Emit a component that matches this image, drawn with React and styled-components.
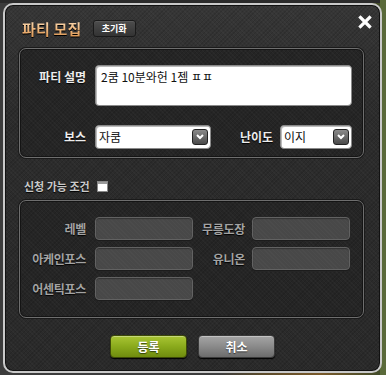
import React from 'react';
import styled, { createGlobalStyle } from 'styled-components';

const Global = createGlobalStyle`
  html, body {
    margin: 0;
    padding: 0;
    background: #2a2a2a;
  }
  body {
    width: 386px;
    height: 375px;
    overflow: hidden;
    font-family: "Noto Sans CJK KR", "Noto Sans", sans-serif;
    background:
      linear-gradient(90deg, rgba(0,0,0,0) 0 380px, #5a6a3a 380px),
      linear-gradient(180deg, #2b2b2b 0 3px, transparent 3px),
      linear-gradient(90deg, #3c3c3c 0 220px, #5a4a2a 260px, #7a5a2a 320px, #3c4a2a 386px);
  }
`;

const texture = `
  repeating-linear-gradient(45deg, rgba(255,255,255,0.025) 0 1px, transparent 1px 3px),
  repeating-linear-gradient(-45deg, rgba(0,0,0,0.12) 0 1px, transparent 1px 3px)
`;

// window
const Window = styled.div`
  position: relative;
  box-sizing: border-box;
  margin: 3px 0 0 3px;
  width: 379px;
  height: 370px;
  border: 2px solid #c9c9c9;
  border-radius: 10px;
  padding: 12px 16px 0 14px;
  display: flex;
  flex-direction: column;
  background: ${texture}, linear-gradient(180deg, #363636 0%, #2c2c2c 30%, #2a2a2a 100%);
  box-shadow: inset 0 0 0 1px #111;
`;

const Header = styled.div`
  height: 22px;
  display: flex;
  align-items: center;
  gap: 11px;
  padding-left: 3px;
`;

const Title = styled.h1`
  margin: 0;
  font-size: 15px;
  font-weight: 700;
  letter-spacing: 0.2px;
  background: linear-gradient(180deg, #fde6c6 0%, #eeb67c 55%, #d68f4a 100%);
  -webkit-background-clip: text;
  background-clip: text;
  color: transparent;
  filter: drop-shadow(0 1px 0 #000);
`;

const SmallButton = styled.button`
  height: 17px;
  width: 43px;
  padding: 0;
  border: 1px solid #1a1a1a;
  border-radius: 3px;
  background: linear-gradient(180deg, #4d4d4d 0%, #333 100%);
  box-shadow: inset 0 1px 0 #5a5a5a;
  color: #fff;
  font-family: inherit;
  font-size: 9px;
  font-weight: 700;
  line-height: 15px;
`;

const Close = styled.button`
  position: absolute;
  top: 10px;
  right: 8px;
  width: 14px;
  height: 14px;
  padding: 0;
  border: 0;
  background: none;
`;

const Panel = styled.div`
  box-sizing: border-box;
  width: 345px;
  height: ${p => p.$h}px;
  margin-top: ${p => p.$mt}px;
  border: 1px solid #6e6e6e;
  border-radius: 7px;
  background: ${texture}, #252525;
  box-shadow: inset 0 0 0 1px #141414, 0 0 0 1px #1a1a1a;
`;

const InfoPanel = styled(Panel)`
  padding: 16px 11px 0 0;
  display: grid;
  grid-template-columns: 66px 1fr;
  column-gap: 9px;
  row-gap: 10px;
  align-items: start;
`;

const Label = styled.span`
  font-size: 12px;
  font-weight: 700;
  color: #ededed;
  text-align: right;
  line-height: 24px;
  white-space: nowrap;
  text-shadow: 0 1px 1px #000;
`;

const TextBox = styled.div`
  box-sizing: border-box;
  height: 41px;
  background: #fff;
  border: 1px solid #8a8a8a;
  border-radius: 4px;
  box-shadow: inset 1px 1px 0 #bbb;
  padding: 2px 5px;
  font-size: 12px;
  line-height: 18px;
  color: #111;
`;

const SelectRow = styled.div`
  display: flex;
  align-items: center;
  gap: 7px;
`;

const Select = styled.div`
  box-sizing: border-box;
  width: ${p => p.$w}px;
  height: 24px;
  background: #fff;
  border: 1px solid #8a8a8a;
  border-radius: 4px;
  box-shadow: inset 1px 1px 0 #bbb;
  display: flex;
  align-items: center;
  justify-content: space-between;
  padding: 0 2px 0 3px;
  font-size: 12px;
  color: #111;
`;

const Arrow = styled.span`
  width: 16px;
  height: 16px;
  border-radius: 3px;
  border: 1px solid #222;
  box-sizing: border-box;
  background: linear-gradient(180deg, #8a8a8a 0%, #4a4a4a 100%);
  display: flex;
  align-items: center;
  justify-content: center;
`;

const SideLabel = styled(Label)`
  flex: 1;
`;

const CondRow = styled.div`
  display: flex;
  align-items: center;
  gap: 7px;
  margin: 21px 0 0 5px;
  height: 14px;
`;

const CondLabel = styled.span`
  font-size: 11px;
  font-weight: 700;
  color: #c9c9c9;
  text-shadow: 0 1px 1px #000;
`;

const Check = styled.span`
  width: 11px;
  height: 11px;
  box-sizing: border-box;
  border: 1px solid #888;
  background: linear-gradient(180deg, #9a9a9a 0 2px, #fff 2px);
`;

const CondPanel = styled(Panel)`
  padding-top: 16px;
  display: grid;
  grid-template-columns: 75px 98px 59px 98px;
  grid-auto-rows: 23px;
  row-gap: 7px;
`;

const CondLabelCell = styled.span`
  font-size: 12px;
  font-weight: 700;
  letter-spacing: -0.3px;
  color: #a3a3a3;
  text-align: right;
  padding-right: ${p => p.$pr}px;
  line-height: 23px;
  white-space: nowrap;
  text-shadow: 0 1px 1px #000;
`;

const Field = styled.div`
  box-sizing: border-box;
  border: 1px solid #626262;
  border-radius: 4px;
  background: repeating-linear-gradient(45deg, rgba(255,255,255,0.02) 0 1px, transparent 1px 3px), #484848;
  box-shadow: inset 0 1px 1px #333, 0 1px 0 #1c1c1c;
`;

const Footer = styled.div`
  display: flex;
  justify-content: center;
  gap: 11px;
  margin-top: 17px;
  margin-left: 2px;
`;

const ActionButton = styled.button`
  width: 77px;
  height: 23px;
  padding: 0;
  border: 1px solid ${p => (p.$primary ? '#3d4a08' : '#3a3a3a')};
  border-radius: 4px;
  background: ${p =>
    p.$primary
      ? 'linear-gradient(180deg, #a9c534 0%, #8aaa1c 50%, #6f8c0e 100%)'
      : 'linear-gradient(180deg, #a5a5a5 0%, #8a8a8a 50%, #6c6c6c 100%)'};
  box-shadow: inset 0 1px 0 rgba(255,255,255,0.35), 0 1px 1px #000;
  color: #fff;
  font-family: inherit;
  font-size: 12px;
  font-weight: 700;
  text-shadow: 0 1px 1px rgba(0,0,0,0.6);
`;

function Chevron() {
  return (
    <svg width="8" height="6" viewBox="0 0 8 6">
      <path d="M1 1 L4 4 L7 1" stroke="#fff" strokeWidth="2" fill="none" />
    </svg>
  );
}

export default function App() {
  return (
    <>
      <Global />
      <Window>
        <Header>
          <Title>파티 모집</Title>
          <SmallButton>초기화</SmallButton>
        </Header>
        <Close aria-label="닫기">
          <svg width="14" height="14" viewBox="0 0 14 14">
            <path d="M2.5 2.5 L11.5 11.5 M11.5 2.5 L2.5 11.5" stroke="#fff" strokeWidth="3.2" strokeLinecap="square" />
          </svg>
        </Close>

        <InfoPanel $h={110} $mt={9}>
          <Label>파티 설명</Label>
          <TextBox>2쿰 10분와헌 1젬 ㅍㅍ</TextBox>
          <Label>보스</Label>
          <SelectRow>
            <Select $w={116}>
              자쿰
              <Arrow><Chevron /></Arrow>
            </Select>
            <SideLabel>난이도</SideLabel>
            <Select $w={72}>
              이지
              <Arrow><Chevron /></Arrow>
            </Select>
          </SelectRow>
        </InfoPanel>

        <CondRow>
          <CondLabel>신청 가능 조건</CondLabel>
          <Check />
        </CondRow>

        <CondPanel $h={118} $mt={7}>
          <CondLabelCell $pr={9}>레벨</CondLabelCell>
          <Field />
          <CondLabelCell $pr={7}>무릉도장</CondLabelCell>
          <Field />
          <CondLabelCell $pr={9}>아케인포스</CondLabelCell>
          <Field />
          <CondLabelCell $pr={7}>유니온</CondLabelCell>
          <Field />
          <CondLabelCell $pr={9}>어센틱포스</CondLabelCell>
          <Field />
        </CondPanel>

        <Footer>
          <ActionButton $primary>등록</ActionButton>
          <ActionButton>취소</ActionButton>
        </Footer>
      </Window>
    </>
  );
}
